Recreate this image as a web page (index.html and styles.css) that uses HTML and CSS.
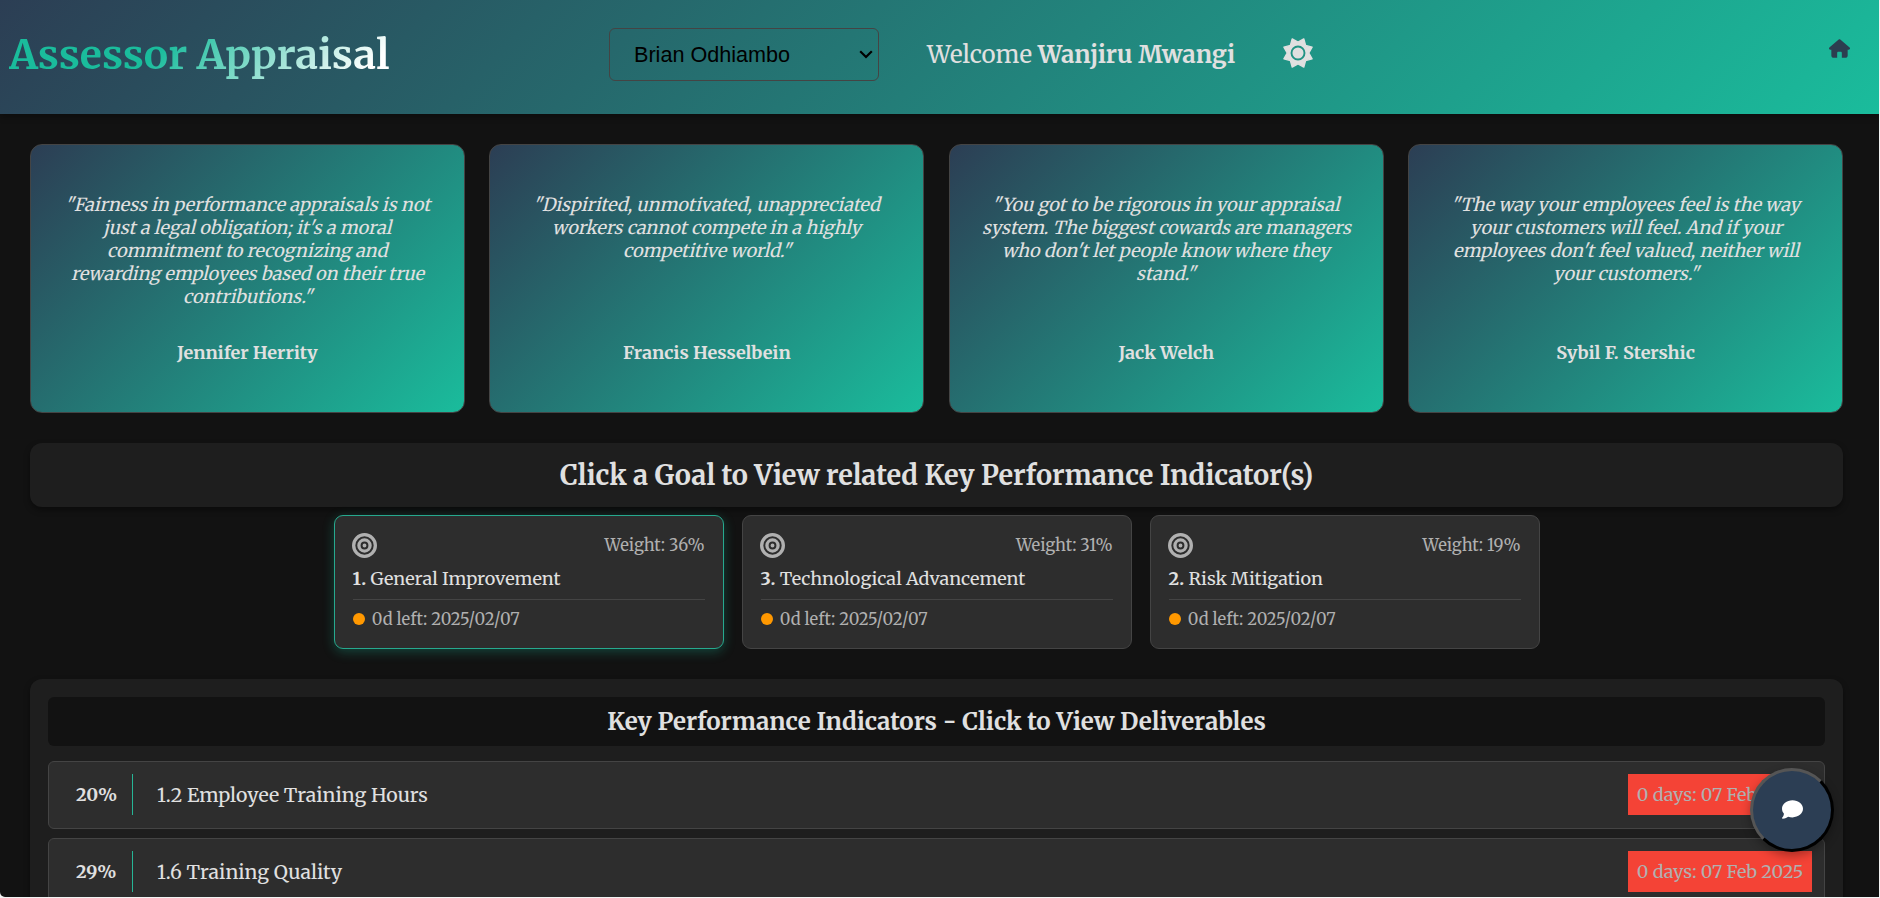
FILE: index.html
```html
<!DOCTYPE html>
<html lang="en">
<head>
<meta charset="utf-8">
<title>Assessor Appraisal</title>
<link rel="stylesheet" href="styles.css">
</head>
<body>
<svg class="defs" width="0" height="0" aria-hidden="true">
  <symbol id="bullseye" viewBox="0 0 512 512"><path fill-rule="evenodd" d="M256 0a256 256 0 1 0 0 512a256 256 0 1 0 0-512zM256 68a188 188 0 1 1 0 376a188 188 0 1 1 0-376zM256 108a148 148 0 1 0 0 296a148 148 0 1 0 0-296zM256 176a80 80 0 1 1 0 160a80 80 0 1 1 0-160zM256 216a40 40 0 1 0 0 80a40 40 0 1 0 0-80z"/></symbol>
</svg>
<div class="app">
  <header class="header">
    <h1 class="title">Assessor Appraisal</h1>
    <div class="header-mid">
      <div class="picker-wrap">
        <select class="picker"><option>Brian Odhiambo</option></select>
        <svg class="chevron" viewBox="0 0 14 9"><path d="M1.200 1.200L7 7L12.800 1.200" fill="none" stroke="#000" stroke-width="2.200"/></svg>
      </div>
      <span class="welcome">Welcome <b>Wanjiru Mwangi</b></span>
      <svg class="sun" viewBox="-16 -16 32 32"><path d="M0-10.8L5.8-14.1L7.6-7.6L14.1-5.8L10.8 0L14.1 5.8L7.6 7.6L5.8 14.1L0 10.8L-5.8 14.1L-7.6 7.6L-14.1 5.8L-10.8 0L-14.1-5.8L-7.6-7.6L-5.8-14.1Z" fill="#e0e0e0" stroke="#e0e0e0" stroke-width="1.4" stroke-linejoin="round"/><circle r="6.5" fill="none" stroke="#219384" stroke-width="1.900"/></svg>
    </div>
    <svg class="home" viewBox="0 0 576 512"><path fill="#2c3e50" d="M575.800 255.500c0 18-15 32.100-32 32.100h-32l.7 160.200c.2 35.500-28.500 64.300-64 64.300H352V376c0-17.700-14.300-32-32-32h-64c-17.700 0-32 14.300-32 32v136H128.100c-35.300 0-64-28.700-64-64V287.600H32c-18 0-32-14-32-32.100c0-9 3-17 10-24L266.400 8c7-7 15-8 22-8s15 2 21 7l255.400 224.500c8 7 12 15 11 24z"/></svg>
  </header>
  <main class="main">
    <section class="quotes">
      <article class="quote"><p><span>"Fairness in performance appraisals is not</span> <span>just a legal obligation; it's a moral</span> <span>commitment to recognizing and</span> <span>rewarding employees based on their true</span> <span>contributions."</span></p><b>Jennifer Herrity</b></article>
      <article class="quote"><p><span>"Dispirited, unmotivated, unappreciated</span> <span>workers cannot compete in a highly</span> <span>competitive world."</span></p><b>Francis Hesselbein</b></article>
      <article class="quote"><p><span>"You got to be rigorous in your appraisal</span> <span>system. The biggest cowards are managers</span> <span>who don't let people know where they</span> <span>stand."</span></p><b>Jack Welch</b></article>
      <article class="quote"><p><span>"The way your employees feel is the way</span> <span>your customers will feel. And if your</span> <span>employees don't feel valued, neither will</span> <span>your customers."</span></p><b>Sybil F. Stershic</b></article>
    </section>
    <h2 class="goals-heading">Click a Goal to View related Key Performance Indicator(s)</h2>
    <section class="goals">
      <article class="goal goal-active">
        <div class="goal-top"><svg class="target"><use href="#bullseye"/></svg><span>Weight: 36%</span></div>
        <h3 class="goal-name"><b>1.</b> General Improvement</h3>
        <div class="goal-date"><i class="dot"></i>0d left: 2025/02/07</div>
      </article>
      <article class="goal">
        <div class="goal-top"><svg class="target"><use href="#bullseye"/></svg><span>Weight: 31%</span></div>
        <h3 class="goal-name"><b>3.</b> Technological Advancement</h3>
        <div class="goal-date"><i class="dot"></i>0d left: 2025/02/07</div>
      </article>
      <article class="goal">
        <div class="goal-top"><svg class="target"><use href="#bullseye"/></svg><span>Weight: 19%</span></div>
        <h3 class="goal-name"><b>2.</b> Risk Mitigation</h3>
        <div class="goal-date"><i class="dot"></i>0d left: 2025/02/07</div>
      </article>
    </section>
    <section class="kpis">
      <h2 class="kpi-heading">Key Performance Indicators - Click to View Deliverables</h2>
      <div class="kpi"><b class="kpi-weight">20%</b><span class="kpi-name">1.2 Employee Training Hours</span><span class="badge">0 days: 07 Feb 2025</span></div>
      <div class="kpi"><b class="kpi-weight">29%</b><span class="kpi-name">1.6 Training Quality</span><span class="badge">0 days: 07 Feb 2025</span></div>
    </section>
  </main>
  <button class="chat" aria-label="Chat"><svg viewBox="0 0 512 512"><path fill="#fff" d="M512 240c0 114.900-114.600 208-256 208c-37.100 0-72.300-6.400-104.100-17.900c-11.900 8.700-31.300 20.600-54.300 30.600C73.600 471.100 44.700 480 16 480c-6.500 0-12.300-3.900-14.800-9.900s-1.100-12.800 3.400-17.400l.3-.3c.3-.3 .7-.7 1.300-1.400c1.100-1.200 2.800-3.100 4.900-5.700c4.100-5 9.600-12.400 15.200-21.600c10-16.600 19.500-38.400 21.400-62.900C17.700 326.800 0 285.100 0 240C0 125.100 114.600 32 256 32s256 93.100 256 208z"/></svg></button>
</div>
</body>
</html>
```
FILE: styles.css
```css
* { box-sizing: border-box; }
html { background: #f2f2f2; overflow: hidden; }
body {
  margin: 0;
  height: 898px;
  overflow: hidden;
  color: #e0e0e0;
  font-family: Merriweather, "Noto Serif", "DejaVu Serif Condensed", serif;
}
h1, h2, h3, p { margin: 0; }
.defs { position: absolute; }

.app {
  position: relative;
  width: 1879px;
  height: 897px;
  overflow: hidden;
  background: #121212;
  border-bottom-left-radius: 5px;
}

.header {
  display: flex;
  align-items: center;
  height: 114px;
  padding: 0 29px 5px 9px;
  background: linear-gradient(135deg, #2c3e54, #1abc9c);
  box-shadow: 0 3px 6px rgba(0, 0, 0, 0.3);
}
.title {
  width: 600px;
  font-size: 40.8px;
  font-weight: 700;
  line-height: 60px;
  white-space: nowrap;
  color: transparent;
  background: linear-gradient(135deg, #1abc9c 0 125px, #fff 285px);
  background-clip: text;
  -webkit-background-clip: text;
}
.header-mid {
  display: flex;
  align-items: center;
  flex: 1;
}
.picker-wrap { position: relative; margin-right: 48px; }
.picker {
  display: block;
  appearance: none;
  width: 270px;
  height: 53px;
  padding: 0 0 0 24px;
  border: 1px solid #444;
  border-radius: 6px;
  background: transparent;
  color: #000;
  font: 21.6px "Liberation Sans", Arial, sans-serif;
}
.chevron {
  position: absolute;
  right: 6px;
  top: 22px;
  width: 14px;
  height: 9px;
}
.welcome { margin-right: 47px; font-size: 24px; white-space: nowrap; }
.sun { width: 32px; height: 32px; margin-bottom: 3px; }
.home { width: 21px; height: 19px; margin-bottom: 12px; }

.main { padding: 30px 36px 0 30px; }

.quotes {
  display: grid;
  grid-template-columns: repeat(4, 1fr);
  gap: 24.6px;
  margin-bottom: 30px;
}
.quote {
  display: flex;
  flex-direction: column;
  height: 269px;
  padding: 48px 24px 0;
  border: 1px solid #444;
  border-radius: 12px;
  background: linear-gradient(135deg, #2c3e54, #1abc9c);
  text-align: center;
  font-size: 18px;
}
.quote p {
  display: flex;
  flex-direction: column;
  align-items: center;
  height: 146px;
  line-height: 23px;
  white-space: nowrap;
}
/* slanted upright letterforms, pivoting on the baseline */
.quote span { transform: skewX(-14deg); transform-origin: 50% 80%; }
.quote b { line-height: 27px; }

.goals-heading {
  height: 64px;
  margin-bottom: 8px;
  border-radius: 12px;
  background: #1e1e1e;
  box-shadow: 0 3px 6px rgba(0, 0, 0, 0.4);
  font-size: 27px;
  line-height: 64px;
  text-align: center;
}
.goals {
  display: flex;
  justify-content: center;
  gap: 18px;
  margin-bottom: 30px;
}
.goal {
  width: 390px;
  height: 134px;
  padding: 16px 18px 0;
  border: 1px solid #444;
  border-radius: 9px;
  background: #2d2d2d;
  color: #b0b0b0;
  font-size: 16.5px;
}
.goal-active {
  border-color: #26a98e;
  box-shadow: 0 3px 12px rgba(26, 188, 156, 0.3);
}
.goal-top { display: flex; justify-content: space-between; height: 27px; line-height: 28px; }
.target { width: 25px; height: 25px; margin: 1px 0 0 -1px; fill: #b0b0b0; }
.goal-name {
  height: 41px;
  padding-top: 7px;
  border-bottom: 1px solid #444;
  color: #e0e0e0;
  font-size: 18px;
  font-weight: 400;
  line-height: 26px;
}
.goal-date { display: flex; align-items: center; height: 38px; }
.dot {
  width: 12px;
  height: 12px;
  margin-right: 7.3px;
  border-radius: 50%;
  background: #ff9800;
}

.kpis {
  height: 400px;
  padding: 18px;
  border-radius: 12px;
  background: #1e1e1e;
  box-shadow: 0 3px 6px rgba(0, 0, 0, 0.4);
}
.kpi-heading {
  height: 49px;
  margin-bottom: 15px;
  border-radius: 6px;
  background: #121212;
  font-size: 24px;
  line-height: 49px;
  text-align: center;
}
.kpi {
  display: flex;
  align-items: center;
  height: 68px;
  margin-bottom: 9px;
  padding: 0 12px 1px 27px;
  border: 1px solid #444;
  border-radius: 6px;
  background: #2d2d2d;
}
.kpi-weight {
  width: 57px;
  border-right: 1px solid #26b596;
  font-size: 18px;
  line-height: 41px;
}
.kpi-name { flex: 1; padding-left: 24px; font-size: 19.5px; }
.badge {
  width: 184px;
  background: #f44336;
  color: #b0b0b0;
  font-size: 18px;
  line-height: 41px;
  text-align: center;
}

.chat {
  position: absolute;
  right: 45px;
  bottom: 45px;
  display: flex;
  align-items: center;
  justify-content: center;
  width: 84px;
  height: 84px;
  padding: 0 0 2px;
  border: 3px solid #000;
  border-color: #555 #000 #000 #555;
  border-radius: 50%;
  background: #2c3e54;
  box-shadow: 0 4px 10px rgba(0, 0, 0, 0.3);
}
.chat svg { width: 21px; height: 21px; }
```
